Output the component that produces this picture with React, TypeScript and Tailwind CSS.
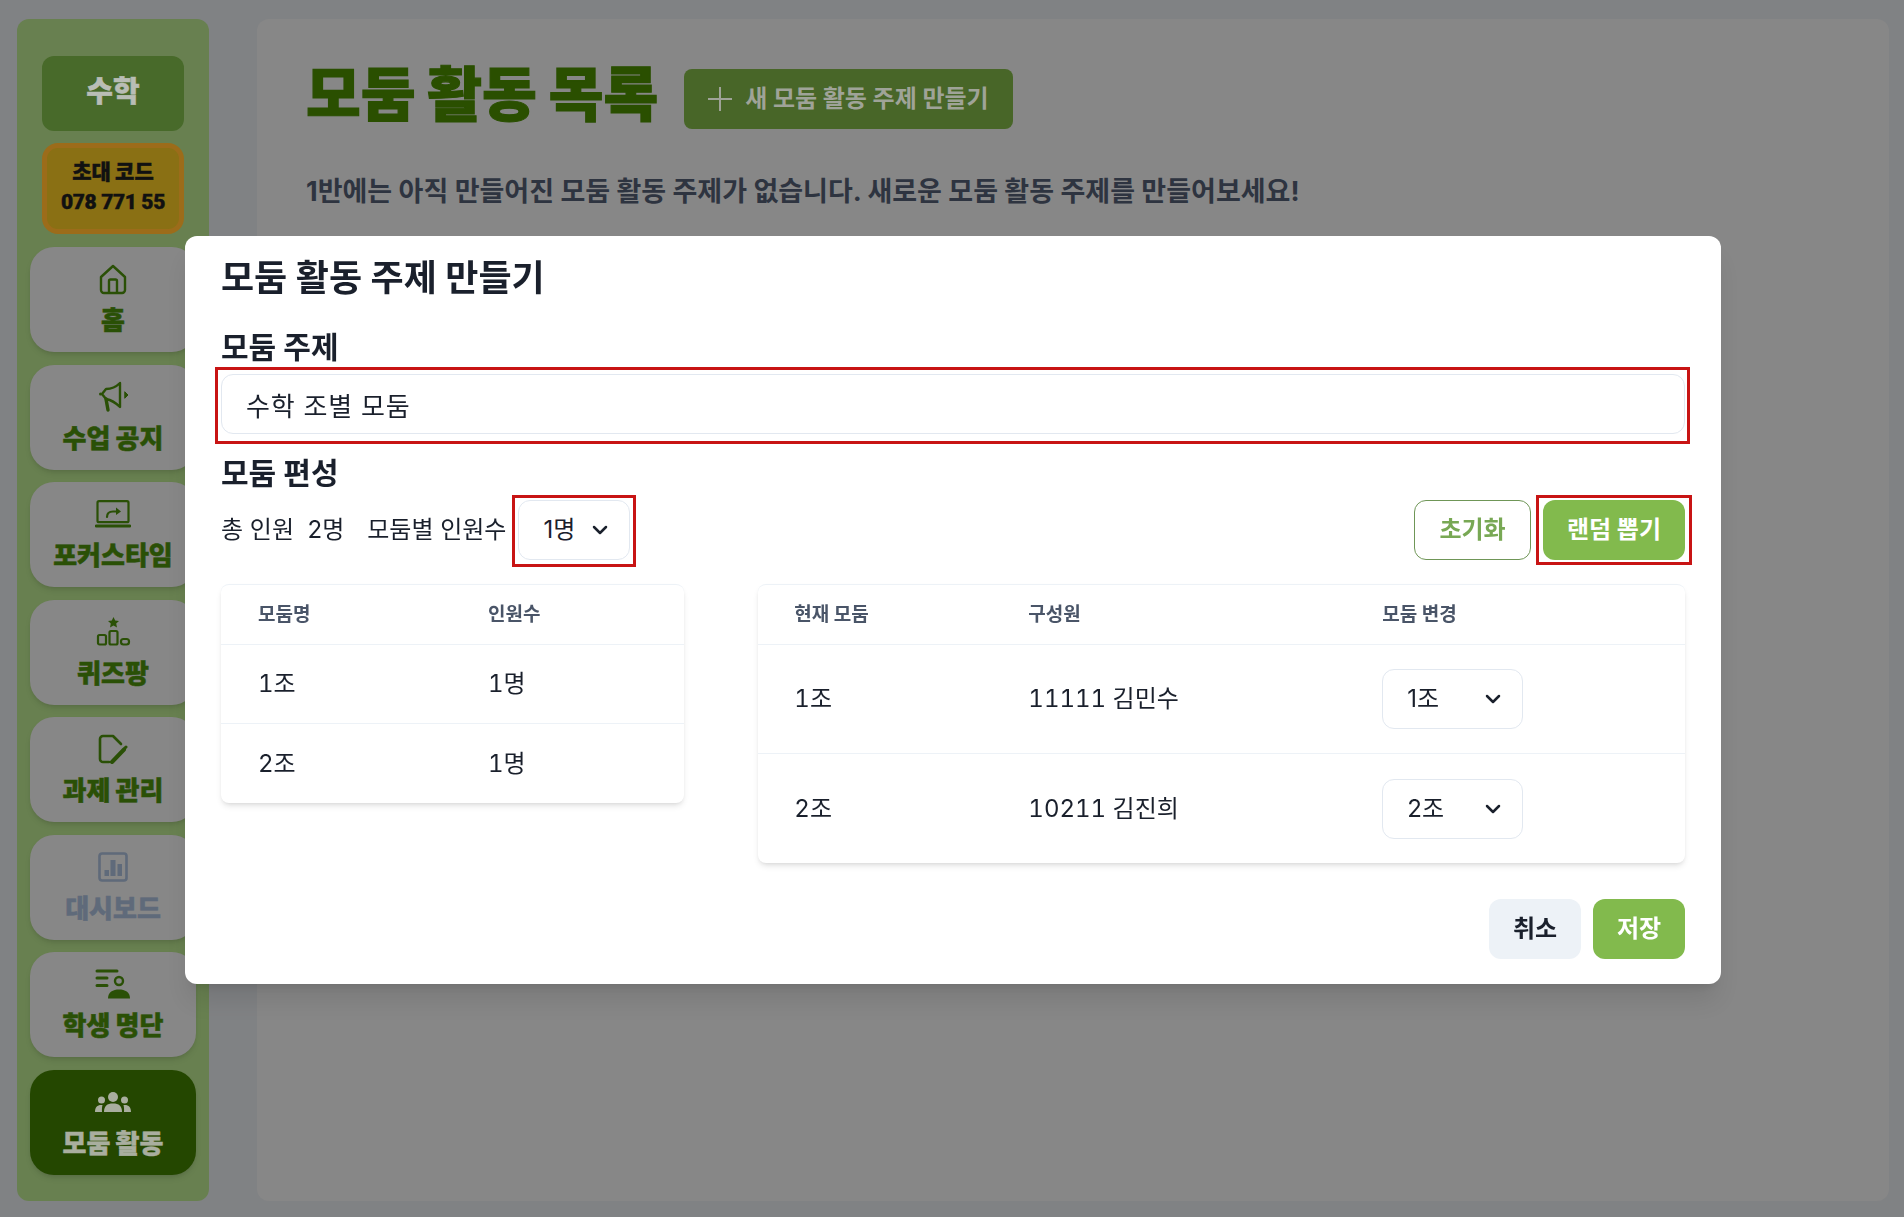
import { ChevronDown } from 'lucide-react';
import type { ReactNode } from 'react';

const HomeIcon = () => (
  <svg width="28" height="31" viewBox="0 0 28 31" fill="none" stroke="currentColor" strokeWidth="2.4" strokeLinejoin="round">
    <path d="M2 13 L14 2 L26 13 V26 a3 3 0 0 1 -3 3 H5 a3 3 0 0 1 -3 -3 Z" />
    <path d="M10 29 V17 a1.5 1.5 0 0 1 1.5 -1.5 h5 a1.5 1.5 0 0 1 1.5 1.5 V29" />
  </svg>
);

const MegaphoneIcon = () => (
  <svg width="31" height="31" viewBox="0 0 31 31" fill="none" stroke="currentColor" strokeWidth="2.4" strokeLinejoin="round" strokeLinecap="round">
    <path d="M22 2 C18 6 13 8 8 8 L4 13 L8 18 C13 19 18 22 22 26 Z" />
    <path d="M8 18 L10 29" strokeWidth="3.4" />
    <path d="M27 11 L30 14 L27 17 Z" fill="currentColor" strokeWidth="1" />
    <circle cx="2.5" cy="13" r="1.5" fill="currentColor" stroke="none" />
  </svg>
);

const LaptopIcon = () => (
  <svg width="36" height="28" viewBox="0 0 36 28" fill="none" stroke="currentColor" strokeLinecap="round" strokeLinejoin="round">
    <rect x="2.5" y="1.2" width="31" height="21" rx="1.5" strokeWidth="2.2" />
    <path d="M1 26 H35" strokeWidth="2.8" />
    <path d="M12 17 C12 13 14 11.5 18 11.5 H23" strokeWidth="2.2" />
    <path d="M21 7.5 L26 11.5 L21 15 Z" fill="currentColor" stroke="none" />
  </svg>
);

const PodiumIcon = () => (
  <svg width="35" height="29" viewBox="0 0 35 29" fill="none" stroke="currentColor" strokeWidth="2.2" strokeLinejoin="round">
    <path d="M17.5 0 L19.2 3.6 L23 4 L20.2 6.6 L21 10.4 L17.5 8.5 L14 10.4 L14.8 6.6 L12 4 L15.8 3.6 Z" fill="currentColor" stroke="none" />
    <rect x="2" y="18" width="8" height="9.5" rx="1.5" />
    <rect x="13.5" y="14" width="8" height="13.5" rx="1.5" />
    <rect x="25" y="22" width="8" height="5.5" rx="2.5" />
  </svg>
);

const TaskIcon = () => (
  <svg width="30" height="30" viewBox="0 0 30 30" fill="none" stroke="currentColor" strokeLinejoin="round" strokeLinecap="round">
    <path d="M11 28 H5 a3 3 0 0 1 -3 -3 V5 a3 3 0 0 1 3 -3 H15 L23 10" strokeWidth="2.6" />
    <path d="M14 28 L26 15.5" strokeWidth="4" />
    <path d="M26.5 14.5 L28 13" strokeWidth="3" />
  </svg>
);

const ChartIcon = () => (
  <svg width="30" height="30" viewBox="0 0 30 30" fill="currentColor">
    <rect x="1.5" y="1.5" width="27" height="27" rx="2.5" fill="none" stroke="currentColor" strokeWidth="2.6" />
    <rect x="6.5" y="18" width="4.5" height="6" />
    <rect x="12.5" y="8" width="5" height="16" />
    <rect x="19.5" y="12" width="4.5" height="12" />
  </svg>
);

const RosterIcon = () => (
  <svg width="36" height="30" viewBox="0 0 36 30" fill="none" stroke="currentColor" strokeLinecap="round">
    <path d="M2 2 H22 M2 9 H12 M2 16.5 H12" strokeWidth="3" />
    <circle cx="24" cy="12" r="4" strokeWidth="2.4" />
    <path d="M13 29.5 C13 23 18 20.5 24 20.5 C30 20.5 35 23 35 29.5 Z" fill="currentColor" stroke="none" />
  </svg>
);

const GroupIcon = () => (
  <svg width="36" height="20" viewBox="0 0 36 20" fill="currentColor">
    <circle cx="18" cy="5" r="5" />
    <circle cx="6.5" cy="8" r="3.5" />
    <circle cx="29.5" cy="8" r="3.5" />
    <path d="M9 20 C9 14 12 11.5 18 11.5 C24 11.5 27 14 27 20 Z" />
    <path d="M0 20 C0 15 2.5 12.5 7.5 13 C7 15 6.8 17 7 20 Z" />
    <path d="M36 20 C36 15 33.5 12.5 28.5 13 C29 15 29.2 17 29 20 Z" />
  </svg>
);

const navItems: { label: string; icon: ReactNode; tone?: 'muted' | 'active' }[] = [
  { label: '홈', icon: <HomeIcon /> },
  { label: '수업 공지', icon: <MegaphoneIcon /> },
  { label: '포커스타임', icon: <LaptopIcon /> },
  { label: '퀴즈팡', icon: <PodiumIcon /> },
  { label: '과제 관리', icon: <TaskIcon /> },
  { label: '대시보드', icon: <ChartIcon />, tone: 'muted' },
  { label: '학생 명단', icon: <RosterIcon /> },
  { label: '모둠 활동', icon: <GroupIcon />, tone: 'active' },
];

function Sidebar() {
  return (
    <aside className="w-[192px] shrink-0 rounded-xl bg-[#688050] pt-[37px] pb-[24px] flex flex-col">
      <div className="mx-[25px] h-[75px] rounded-xl bg-[#486a2a] flex items-center justify-center pb-[4px] text-[#b9bdb5] text-[29px] font-black [-webkit-text-stroke:0.5px_currentColor]">
        수학
      </div>
      <div className="mx-[25px] mt-[12px] h-[91px] rounded-2xl border-[5px] border-[#9c6c1a] bg-[#8a7014] flex flex-col items-center justify-center pb-[3px] text-[#111111] font-black [-webkit-text-stroke:0.4px_currentColor]">
        <div className="text-[21px] leading-[31px]">초대 코드</div>
        <div className="text-[21px] leading-[31px] tracking-[-0.4px] font-['Roboto','Noto_Sans_CJK_KR',sans-serif]">078 771 55</div>
      </div>
      <nav className="mx-[13px] mt-[13px] flex flex-col gap-[12.5px]">
        {navItems.map((item) => (
          <div
            key={item.label}
            className={`h-[105px] rounded-3xl shadow-md flex flex-col items-center pt-[15px] ${
              item.tone === 'active'
                ? 'bg-[#244700] text-[#a9ae9f]'
                : item.tone === 'muted'
                  ? 'bg-[#878787] text-[#5f6a7a]'
                  : 'bg-[#878787] text-[#2a5006]'
            }`}
          >
            <div className="h-[34px] flex items-center justify-center">{item.icon}</div>
            <div className="mt-[9px] text-[26px] leading-[32px] font-black whitespace-nowrap [-webkit-text-stroke:0.5px_currentColor]">{item.label}</div>
          </div>
        ))}
      </nav>
    </aside>
  );
}

function MainPanel() {
  return (
    <main className="flex-1 rounded-xl bg-[#878787] pl-[49px] pt-[50px]">
      <div className="flex items-start">
        <h1 className="text-[59.5px] leading-[50px] font-black text-[#2a4f00] [-webkit-text-stroke:1.2px_currentColor]">모둠 활동 목록</h1>
        <button className="ml-[26px] h-[60px] w-[329px] rounded-lg bg-[#486628] text-[#9fa398] text-[24px] font-bold flex items-center pl-[24px] gap-[13px]">
          <svg width="24" height="24" viewBox="0 0 24 24" stroke="currentColor" strokeWidth="2">
            <path d="M12 0 V24 M0 12 H24" />
          </svg>
          새 모둠 활동 주제 만들기
        </button>
      </div>
      <p className="mt-[48px] text-[27px] leading-[30px] font-bold text-[#2e3440]">
        1반에는 아직 만들어진 모둠 활동 주제가 없습니다. 새로운 모둠 활동 주제를 만들어보세요!
      </p>
    </main>
  );
}

function SelectBox({ value, width }: { value: string; width: string }) {
  return (
    <div className={`${width} h-[60px] rounded-xl border border-[#e2e8f0] bg-white flex items-center justify-between pl-[24px] pr-[17px] text-[24px] text-[#1a202c] normal-nums`}>
      <span>{value}</span>
      <ChevronDown size={24} strokeWidth={2.5} />
    </div>
  );
}

// 빨간 주석 박스
function RedBox({ className }: { className: string }) {
  return <div className={`absolute border-[3px] border-[#c81414] pointer-events-none ${className}`} />;
}

const groupRows = [
  { name: '1조', count: '1명' },
  { name: '2조', count: '1명' },
];

const memberRows = [
  { group: '1조', member: '11111 김민수' },
  { group: '2조', member: '10211 김진희' },
];

function GroupModal() {
  return (
    <div className="fixed inset-0 flex items-center justify-center pt-[3px] pl-[2px]">
      <div className="w-[1536px] h-[748px] rounded-xl bg-white px-[36px] pt-[21px] shadow-xl text-[#1a202c]">
        <h2 className="text-[36px] leading-[42px] font-bold">모둠 활동 주제 만들기</h2>

        <div className="mt-[30px] text-[30px] leading-[36px] font-bold">모둠 주제</div>
        <div className="relative mt-[9px]">
          <input
            defaultValue="수학 조별 모둠"
            className="w-full h-[60px] rounded-xl border border-[#e2e8f0] pl-[24px] text-[26px] text-[#1a202c] tracking-[0.8px]"
          />
          <RedBox className="-left-[6px] -right-[5px] -top-[7px] -bottom-[10px]" />
        </div>

        <div className="mt-[21px] text-[30px] leading-[36px] font-bold">모둠 편성</div>
        <div className="mt-[9px] flex items-center justify-between">
          <div className="flex items-center text-[24px]">
            <span>총 인원&nbsp; 2명</span>
            <span className="ml-[23px]">모둠별 인원수</span>
            <div className="relative ml-[12px]">
              <SelectBox value="1명" width="w-[112px]" />
              <RedBox className="-left-[6px] -right-[6px] -top-[5px] -bottom-[7px]" />
            </div>
          </div>
          <div className="flex items-center gap-[12px]">
            <button className="w-[117px] h-[60px] rounded-xl border border-[#6f9657] text-[#78a854] text-[24px] font-bold">
              초기화
            </button>
            <div className="relative">
              <button className="w-[142px] h-[60px] rounded-xl bg-[#82ba4d] text-white text-[24px] font-bold">
                랜덤 뽑기
              </button>
              <RedBox className="-left-[7px] -right-[7px] -top-[5px] -bottom-[5px]" />
            </div>
          </div>
        </div>

        <div className="mt-[24px] grid grid-cols-[1fr_2fr] gap-[74px] items-start">
          <div className="rounded-lg border-t border-[#edf2f7] shadow-md">
            <div className="h-[60px] grid grid-cols-[230px_1fr] items-center pl-[37px] pt-[2px] text-[19px] font-bold text-[#4a5568] border-b border-[#edf2f7]">
              <span>모둠명</span>
              <span>인원수</span>
            </div>
            {groupRows.map((row) => (
              <div key={row.name} className="h-[79px] grid grid-cols-[230px_1fr] items-center pl-[37px] text-[24px] tabular-nums border-b border-[#edf2f7] last:border-b-0">
                <span>{row.name}</span>
                <span>{row.count}</span>
              </div>
            ))}
          </div>

          <div className="rounded-lg border-t border-[#edf2f7] shadow-md">
            <div className="h-[60px] grid grid-cols-[234px_354px_1fr] items-center pl-[36px] pt-[2px] text-[19px] font-bold text-[#4a5568] border-b border-[#edf2f7]">
              <span>현재 모둠</span>
              <span>구성원</span>
              <span>모둠 변경</span>
            </div>
            {memberRows.map((row) => (
              <div key={row.group} className="h-[109px] grid grid-cols-[234px_354px_1fr] items-center pl-[36px] text-[24px] tabular-nums border-b border-[#edf2f7] last:border-b-0">
                <span>{row.group}</span>
                <span>{row.member}</span>
                <SelectBox value={row.group} width="w-[141px]" />
              </div>
            ))}
          </div>
        </div>

        <div className="mt-[36px] flex justify-end gap-[12px]">
          <button className="w-[92px] h-[60px] rounded-xl bg-[#edf2f7] text-[24px] font-bold">취소</button>
          <button className="w-[92px] h-[60px] rounded-xl bg-[#82ba4d] text-white text-[24px] font-bold">저장</button>
        </div>
      </div>
    </div>
  );
}

export default function App() {
  return (
    <div className="h-[1217px] overflow-hidden bg-[#808284] pl-[17px] pr-[15px] pt-[19px] pb-[16px] flex gap-[48px] font-['Inter','Noto_Sans_CJK_KR',sans-serif]">
      <Sidebar />
      <MainPanel />
      <GroupModal />
    </div>
  );
}
